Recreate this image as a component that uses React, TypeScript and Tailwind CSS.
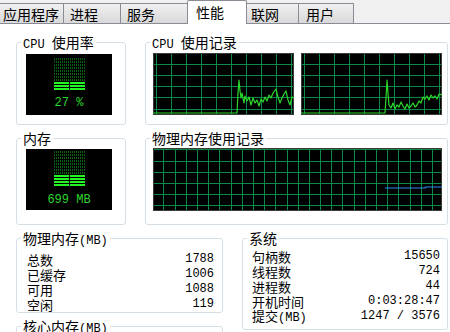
import React from 'react';

const mono = "font-['Liberation_Mono',monospace] text-[12px]";

interface GroupProps {
  title: React.ReactNode;
  className: string;
  children?: React.ReactNode;
}

function Group({ title, className, children }: GroupProps) {
  return (
    <div className={`rounded-[3px] border border-[#d5dfe5] ${className}`}>
      <div className="-mt-[9px] ml-[4px] w-fit bg-white px-[2px] leading-[16px]">{title}</div>
      {children}
    </div>
  );
}

function Meter({ lines, lit, text, barsTop, textTop }: { lines: number; lit: number; text: string; barsTop: string; textTop: string }) {
  const rows = Array.from({ length: lines }, (_, i) => i >= lines - lit);
  const column = (
    <div className="flex w-[15px] flex-col gap-[1px]">
      {rows.map((on, i) => (
        <div
          key={i}
          className={
            on
              ? 'h-[2px] bg-[#22f522]'
              : 'h-[2px] bg-[repeating-linear-gradient(90deg,#0a6114_0px,#0a6114_1px,transparent_1px,transparent_2px)]'
          }
        />
      ))}
    </div>
  );
  return (
    <div className="flex h-[61px] w-[86px] flex-col items-center bg-black">
      <div className={`flex gap-[1px] ${barsTop}`}>
        {column}
        {column}
      </div>
      <div className={`${mono} leading-[14px] text-[#2ed42e] ${textTop}`}>{text}</div>
    </div>
  );
}

interface GraphProps {
  w: number;
  h: number;
  sx: number;
  ox: number;
  sy: number;
  oy: number;
  points?: string;
  color?: string;
}

function Graph({ w, h, sx, ox, sy, oy, points, color }: GraphProps) {
  const vx: number[] = [];
  for (let x = ox; x < w; x += sx) vx.push(x);
  const hy: number[] = [];
  for (let y = oy; y < h; y += sy) hy.push(y);
  return (
    <svg width={w} height={h} className="block shrink-0">
      <rect width={w} height={h} fill="#000" />
      {vx.map((x) => (
        <line key={'v' + x} x1={Math.round(x) + 0.5} x2={Math.round(x) + 0.5} y1={0} y2={h} stroke="#0a8a46" strokeWidth={1} />
      ))}
      {hy.map((y) => (
        <line key={'h' + y} y1={Math.round(y) + 0.5} y2={Math.round(y) + 0.5} x1={0} x2={w} stroke="#0a8a46" strokeWidth={1} />
      ))}
      <rect x={0.5} y={0.5} width={w - 1} height={h - 1} fill="none" stroke="#3a3a3a" />
      {points && <polyline points={points} fill="none" stroke={color} strokeWidth={1.2} strokeLinejoin="round" />}
    </svg>
  );
}

const cpu1 =
  '0,60 84,60 85,40 86,27 87,38 88,45 89,40 91,50 92,43 94,48 96,44 98,52 100,45 102,50 104,47 106,53 108,46 110,49 112,44 114,48 116,42 118,45 120,40 123,36 125,44 127,50 129,45 131,41 133,38 135,47 137,52 139,44 141,45';
const cpu2 =
  '0,60 84,60 85,45 86,27 87,40 88,52 90,55 92,50 94,56 96,52 98,54 100,49 102,53 104,56 106,51 108,55 110,53 112,50 114,54 116,52 118,48 120,50 122,44 124,46 126,43 128,47 130,42 132,45 134,43 136,46 138,41 141,42';
const mem = '232,40 272,40 273,39 289,39';

const rowCls = 'flex h-[15px] items-center justify-between text-[13px] leading-[15px]';

export default function App() {
  return (
    <div className="h-[332px] w-[450px] overflow-hidden bg-[#f0f0f0] font-['Noto_Sans_CJK_SC',sans-serif] text-[14px] text-black">
      <div className="flex h-[24px] items-end border-b border-[#898c95]">
        <div className="flex h-[20px] w-[64px] items-center border-r border-t border-[#898c95] bg-gradient-to-b from-[#f0f0f0] to-[#d9d9d9] pl-[3px] leading-[16px]">应用程序</div>
        <div className="flex h-[20px] w-[57px] items-center border-r border-t border-[#898c95] bg-gradient-to-b from-[#f0f0f0] to-[#d9d9d9] pl-[6px] leading-[16px]">进程</div>
        <div className="flex h-[20px] w-[66px] items-center border-t border-[#898c95] bg-gradient-to-b from-[#f0f0f0] to-[#d9d9d9] pl-[6px] leading-[16px]">服务</div>
        <div className="relative -mb-px flex h-[24px] w-[60px] items-start rounded-t-[2px] border border-b-0 border-[#898c95] bg-white pl-[8px] pt-[3px] leading-[16px]">性能</div>
        <div className="flex h-[20px] w-[52px] items-center border-r border-t border-[#898c95] bg-gradient-to-b from-[#f0f0f0] to-[#d9d9d9] pl-[4px] leading-[16px]">联网</div>
        <div className="flex h-[20px] w-[55px] items-center border-r border-t border-[#898c95] bg-gradient-to-b from-[#f0f0f0] to-[#d9d9d9] pl-[7px] leading-[16px]">用户</div>
      </div>

      <div className="h-full bg-white pl-[16px] pt-[18px]">
        <div className="flex gap-[19px]">
          <Group
            className="h-[83px] w-[110px]"
            title={
              <>
                <span className={mono}>CPU </span>使用率
              </>
            }
          >
            <div className="ml-[9px] mt-[1px]">
              <Meter lines={11} lit={3} text="27 %" barsTop="mt-[4px]" textTop="mt-[6px]" />
            </div>
          </Group>
          <Group
            className="h-[83px] w-[303px]"
            title={
              <>
                <span className={mono}>CPU </span>使用记录
              </>
            }
          >
            <div className="ml-[7px] flex gap-[7px]">
              <Graph w={141} h={62} sx={15} ox={3} sy={11.1} oy={0} points={cpu1} color="#2bd62b" />
              <Graph w={141} h={62} sx={15} ox={3} sy={11.1} oy={0} points={cpu2} color="#2bd62b" />
            </div>
          </Group>
        </div>

        <div className="mt-[13px] flex gap-[19px]">
          <Group className="h-[87px] w-[110px]" title="内存">
            <div className="ml-[9px] mt-[3px]">
              <Meter lines={12} lit={4} text="699 MB" barsTop="mt-[2px]" textTop="mt-[7px]" />
            </div>
          </Group>
          <Group className="h-[87px] w-[303px]" title="物理内存使用记录">
            <div className="ml-[7px] mt-[2px]">
              <Graph w={289} h={63} sx={11.2} ox={-0.9} sy={11.2} oy={1.3} points={mem} color="#2f86f0" />
            </div>
          </Group>
        </div>

        <div className="mt-[13px] flex items-start gap-[19px]">
          <div className="flex flex-col gap-[13px]">
            <Group
              className="h-[75px] w-[207px]"
              title={
                <>
                  物理内存<span className={mono}>(MB)</span>
                </>
              }
            >
              <div className="mt-[3px] pl-[10px] pr-[8px]">
                <div className={rowCls}>
                  <span>总数</span>
                  <span className={mono}>1788</span>
                </div>
                <div className={rowCls}>
                  <span>已缓存</span>
                  <span className={mono}>1006</span>
                </div>
                <div className={rowCls}>
                  <span>可用</span>
                  <span className={mono}>1088</span>
                </div>
                <div className={rowCls}>
                  <span>空闲</span>
                  <span className={mono}>119</span>
                </div>
              </div>
            </Group>
            <Group
              className="h-[60px] w-[207px]"
              title={
                <>
                  核心内存<span className={mono}>(MB)</span>
                </>
              }
            />
          </div>
          <Group className="h-[92px] w-[206px]" title="系统">
            <div className="mt-[3px] pl-[9px] pr-[7px]">
              <div className={rowCls}>
                <span>句柄数</span>
                <span className={mono}>15650</span>
              </div>
              <div className={rowCls}>
                <span>线程数</span>
                <span className={mono}>724</span>
              </div>
              <div className={rowCls}>
                <span>进程数</span>
                <span className={mono}>44</span>
              </div>
              <div className={rowCls}>
                <span>开机时间</span>
                <span className={mono}>0:03:28:47</span>
              </div>
              <div className={rowCls}>
                <span>
                  提交<span className={mono}>(MB)</span>
                </span>
                <span className={mono}>1247 / 3576</span>
              </div>
            </div>
          </Group>
        </div>
      </div>
    </div>
  );
}
